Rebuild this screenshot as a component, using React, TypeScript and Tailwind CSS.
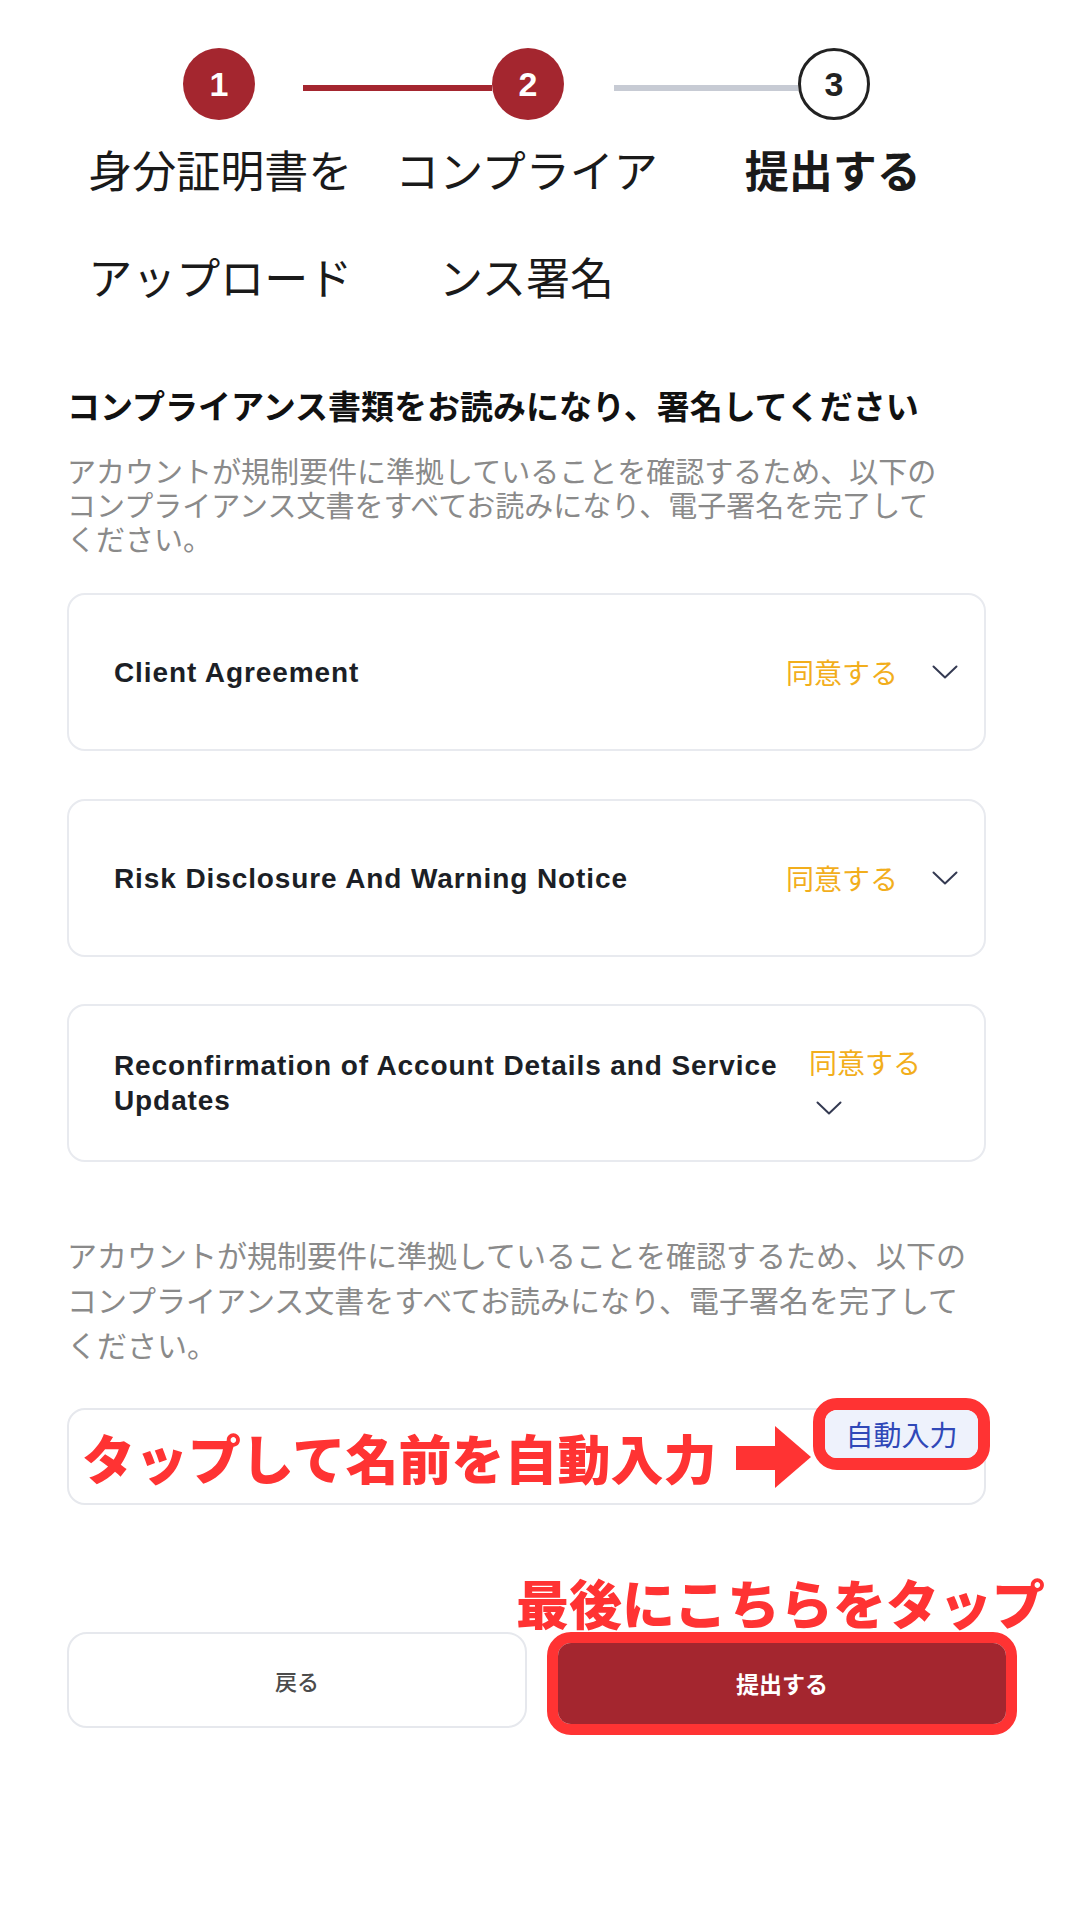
import React from "react";

const JP = "font-['Noto_Sans_CJK_JP','Noto_Sans',sans-serif]";
const LATIN = "font-['Liberation_Sans',Arial,'Noto_Sans_CJK_JP',sans-serif]";

function Chevron({ className = "" }: { className?: string }) {
  return (
    <svg
      className={className}
      width="26"
      height="14"
      viewBox="0 0 26 14"
      fill="none"
      stroke="#343a52"
      strokeWidth="2"
      strokeLinecap="round"
      strokeLinejoin="round"
    >
      <polyline points="1.5,1.5 13,12.5 24.5,1.5" />
    </svg>
  );
}

function StepCircle({ n, done }: { n: number; done: boolean }) {
  return done ? (
    <div
      className={`flex h-[72px] w-[72px] shrink-0 items-center justify-center rounded-full bg-[#a4262f] ${LATIN} text-[34px] font-bold text-white`}
    >
      {n}
    </div>
  ) : (
    <div
      className={`flex h-[72px] w-[72px] shrink-0 items-center justify-center rounded-full border-[3px] border-[#222222] bg-white ${LATIN} text-[34px] font-bold text-[#222222]`}
    >
      {n}
    </div>
  );
}

function StepLabel({ text, bold }: { text: string; bold?: boolean }) {
  return (
    <div className="flex justify-center">
      <div className={`w-[270px] text-center ${bold ? "font-semibold" : ""}`}>{text}</div>
    </div>
  );
}

function DocCard({ title, stacked }: { title: string; stacked?: boolean }) {
  return (
    <div className="flex h-[158px] items-center rounded-[18px] border-2 border-[#e8eaef] bg-white pl-[45px] pr-[26px]">
      <div
        className={`min-w-0 flex-1 ${LATIN} text-[28px] font-bold leading-[35px] tracking-[0.9px] text-[#1c1f26]`}
      >
        {title}
      </div>
      {stacked ? (
        <div className="flex w-[149px] flex-col items-start pb-[9px]">
          <span className={`${JP} text-[28px] leading-[40px] text-[#f2ae1c]`}>同意する</span>
          <Chevron className="ml-[7px] mt-[19px]" />
        </div>
      ) : (
        <div className="flex items-center gap-[34px]">
          <span className={`${JP} text-[28px] leading-[40px] text-[#f2ae1c]`}>同意する</span>
          <Chevron />
        </div>
      )}
    </div>
  );
}

function RightArrow() {
  return (
    <svg width="75" height="62" viewBox="0 0 75 62" className="ml-[20px] shrink-0">
      <rect x="0" y="20" width="40" height="24" fill="#ff3333" />
      <polygon points="39,0 75,31 39,62" fill="#ff3333" />
    </svg>
  );
}

export default function App() {
  return (
    <div className={`min-h-[1920px] w-[1080px] bg-white ${JP}`}>
      {/* progress stepper */}
      <div className="ml-[183px] mt-[48px] flex">
        <StepCircle n={1} done />
        <div className="ml-[48px] mt-[37px] h-[6px] w-[189px] bg-[#a4262f]" />
        <StepCircle n={2} done />
        <div className="ml-[50px] mt-[37px] h-[6px] w-[184px] bg-[#c7cbd4]" />
        <StepCircle n={3} done={false} />
      </div>
      <div className="ml-[67px] mt-[-4px] grid w-[919px] grid-cols-3 text-[44px] leading-[107px] text-[#1a1a1a]">
        <StepLabel text="身分証明書をアップロード" />
        <StepLabel text="コンプライアンス署名" />
        <StepLabel text="提出する" bold />
      </div>

      <div className="ml-[67px] w-[919px]">
        <h1 className="mt-[55px] text-[33px] font-bold leading-[40px] text-[#111111]">
          コンプライアンス書類をお読みになり、署名してください
        </h1>
        <p className="mt-[28px] w-[885px] text-[29px] leading-[34px] text-[#8a8a8a]">
          アカウントが規制要件に準拠していることを確認するため、以下のコンプライアンス文書をすべてお読みになり、電子署名を完了してください。
        </p>

        <div className="mt-[38px] flex flex-col">
          <DocCard title="Client Agreement" />
          <div className="mt-[48px]">
            <DocCard title="Risk Disclosure And Warning Notice" />
          </div>
          <div className="mt-[47px]">
            <DocCard title="Reconfirmation of Account Details and Service Updates" stacked />
          </div>
        </div>

        <p className="mt-[70px] w-[905px] text-[30px] leading-[45px] text-[#8a8a8a]">
          アカウントが規制要件に準拠していることを確認するため、以下のコンプライアンス文書をすべてお読みになり、電子署名を完了してください。
        </p>

        {/* signature field */}
        <div className="relative mt-[41px] flex h-[97px] items-center rounded-[18px] border-2 border-[#e6e8ed] bg-white pl-[13px]">
          <span className="text-[53px] font-black leading-[60px] text-[#ff3333]">
            タップして名前を自動入力
          </span>
          <RightArrow />
          <div className="absolute right-[-6px] top-[-12px] rounded-[24px] border-[12px] border-[#ff3333] bg-white">
            <div className="flex h-[48px] w-[153px] items-center justify-center rounded-[12px] bg-[#eef2fc] text-[28px] text-[#3048b8]">
              自動入力
            </div>
          </div>
        </div>
      </div>

      <div className="ml-[516px] mt-[67px] text-[53px] font-black leading-[60px] text-[#ff3333]">
        最後にこちらをタップ
      </div>
      <div className="ml-[67px] flex items-start">
        <button className="flex h-[96px] w-[460px] items-center justify-center rounded-[20px] border-2 border-[#e6e8ed] bg-white text-[22px] font-medium text-[#4b4b4b]">
          戻る
        </button>
        <div className="ml-[20px] rounded-[24px] border-[11px] border-[#ff3333]">
          <button className="flex h-[81px] w-[448px] items-center justify-center rounded-[13px] bg-[#a4262f] text-[23px] font-bold text-white">
            提出する
          </button>
        </div>
      </div>
    </div>
  );
}
